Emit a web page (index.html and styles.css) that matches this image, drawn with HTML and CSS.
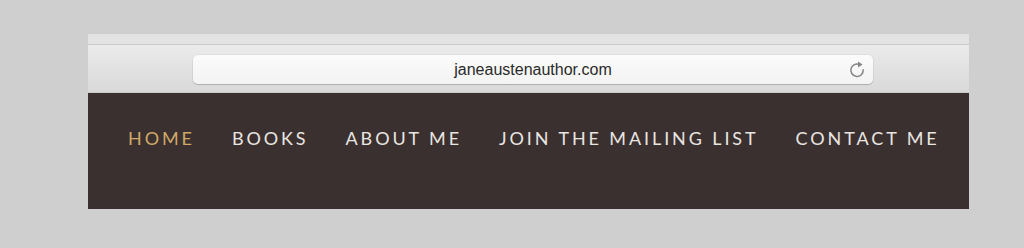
FILE: index.html
```html
<!DOCTYPE html>
<html>
<head>
<meta charset="utf-8">
<link rel="stylesheet" href="styles.css">
</head>
<body>
<div class="window">
  <div class="tabstrip"></div>
  <div class="toolbar">
    <div class="address">
      <span class="url">janeaustenauthor.com</span>
      <svg class="reload" width="18" height="20" viewBox="0 0 18 20">
        <path d="M11.6 5.6 A6.2 6.2 0 1 0 15.2 10.8" fill="none" stroke="#858585" stroke-width="1.5" stroke-linecap="round"/>
        <path d="M10 2.4 L14.6 5.4 L10 8.4 Z" fill="#858585"/>
      </svg>
    </div>
  </div>
  <nav class="nav">
    <a class="item active">HOME</a>
    <a class="item">BOOKS</a>
    <a class="item">ABOUT ME</a>
    <a class="item">JOIN THE MAILING LIST</a>
    <a class="item">CONTACT ME</a>
  </nav>
</div>
</body>
</html>
```

FILE: styles.css
```css
html, body {
  margin: 0;
  padding: 0;
}
body {
  background: #cfcfcf;
  padding: 34px 0 0 88px;
  height: 248px;
  box-sizing: border-box;
  overflow: hidden;
}
.window {
  width: 881px;
}
.tabstrip {
  height: 10px;
  background: #e3e3e3;
  border-bottom: 1px solid #cbcbcb;
}
.toolbar {
  height: 48px;
  background: linear-gradient(#ebebeb, #d9d9d9);
  border-bottom: 1px solid #c9c9c9;
  padding: 10px 96px 0 105px;
  box-sizing: border-box;
}
.address {
  height: 29px;
  background: linear-gradient(#fbfbfb, #f3f3f3);
  border-radius: 5px;
  box-shadow: 0 1px 1px rgba(0,0,0,0.18), 0 0 0 0.5px rgba(0,0,0,0.08);
  display: flex;
  align-items: center;
  justify-content: center;
  position: relative;
}
.url {
  font-family: "Liberation Sans", Arial, sans-serif;
  font-size: 16px;
  color: #2a2a2a;
  padding-top: 1px;
}
.reload {
  position: absolute;
  right: 7px;
  top: 4px;
}
.nav {
  height: 116px;
  background: #3a302f;
  display: flex;
  align-items: flex-start;
  padding: 36px 0 0 40px;
  box-sizing: border-box;
  gap: 37px;
}
.item {
  font-family: Lato, "Open Sans", sans-serif;
  font-size: 18px;
  letter-spacing: 2.9px;
  color: #e9e5e1;
  line-height: 1;
  white-space: nowrap;
}
.item.active {
  color: #cfa867;
}
```
